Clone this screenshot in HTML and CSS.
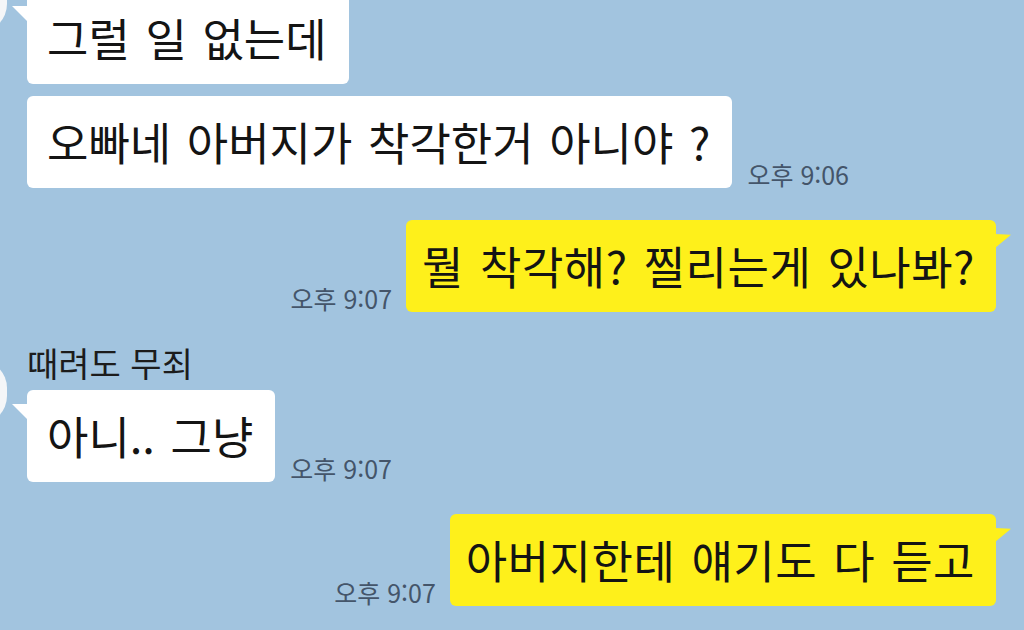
FILE: index.html
```html
<!DOCTYPE html>
<html lang="ko">
<head>
<meta charset="utf-8">
<link rel="stylesheet" href="styles.css">
</head>
<body>
<div class="chat">
  <div class="group them first">
    <div class="avatar av-top"></div>
    <div class="msgs">
      <div class="row">
        <div class="bubble white tail">그럴 일 없는데</div>
      </div>
      <div class="row">
        <div class="bubble white">오빠네 아버지가 착각한거 아니야 ?</div>
        <span class="time">오후 9:06</span>
      </div>
    </div>
  </div>

  <div class="row me r3">
    <span class="time">오후 9:07</span>
    <div class="bubble yellow tail">뭘 착각해? 찔리는게 있나봐?</div>
  </div>

  <div class="group them second">
    <div class="avatar av-mid"></div>
    <div class="msgs">
      <div class="name">때려도 무죄</div>
      <div class="row">
        <div class="bubble white tail">아니.. 그냥</div>
        <span class="time">오후 9:07</span>
      </div>
    </div>
  </div>

  <div class="row me r5">
    <span class="time">오후 9:07</span>
    <div class="bubble yellow tail">아버지한테 얘기도 다 듣고</div>
  </div>
</div>
</body>
</html>
```
FILE: styles.css
```css
html, body {
  margin: 0;
  padding: 0;
  width: 1024px;
  height: 630px;
  overflow: hidden;
  background: #a2c4df;
  font-family: "Noto Sans CJK KR", "Noto Sans", sans-serif;
  color: #141414;
}

.chat {
  display: flex;
  flex-direction: column;
  margin-top: -8px;
}

.group {
  display: flex;
  align-items: flex-start;
}

.avatar {
  flex: none;
  width: 64px;
  height: 64px;
  margin-left: -57px;
  margin-right: 20px;
  border-radius: 28px;
  background: #f4f6f8;
}

.av-top { margin-top: -24px; }
.av-mid { margin-top: 18px; }

.msgs {
  display: flex;
  flex-direction: column;
  gap: 12px;
}

.row {
  display: flex;
  align-items: flex-end;
}

.row.me {
  justify-content: flex-end;
  padding-right: 28px;
}

.r3 { margin-top: 32px; }
.second { margin-top: 30px; }
.r5 { margin-top: 32px; }

.bubble {
  position: relative;
  font-size: 45px;
  line-height: 54px;
  word-spacing: 3px;
  padding: 19px 22px 19px 20px;
  border-radius: 6px;
  white-space: nowrap;
}

.white { background: #ffffff; }
.yellow {
  background: #fef01b;
  padding: 19px 21px 19px 16px;
  letter-spacing: 0.5px;
}

.white.tail::before {
  content: "";
  position: absolute;
  left: -15px;
  top: 14px;
  width: 16px;
  height: 16px;
  background: #ffffff;
  clip-path: polygon(0 0, 100% 0, 100% 100%);
}

.yellow.tail::before {
  content: "";
  position: absolute;
  right: -15px;
  top: 14px;
  width: 16px;
  height: 14px;
  background: #fef01b;
  clip-path: polygon(0 0, 100% 6%, 0 100%);
}

.time {
  font-size: 25px;
  line-height: 1;
  color: #44556a;
  padding-bottom: 1px;
  white-space: nowrap;
}

.them .time { margin-left: 15px; }
.me .time { margin-right: 14px; }

.name {
  font-size: 34px;
  line-height: 42px;
  color: #1c1c1c;
  margin-bottom: -6px;
}
```
